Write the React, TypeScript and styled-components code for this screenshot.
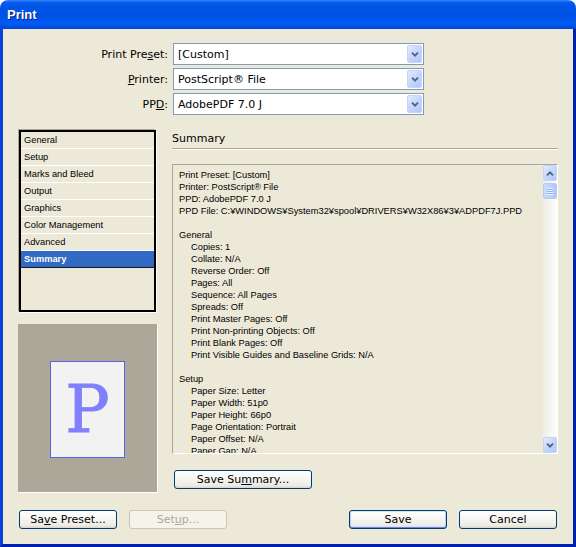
import React from "react";
import styled, { createGlobalStyle } from "styled-components";

const GlobalStyle = createGlobalStyle`
  html, body {
    margin: 0;
    padding: 0;
    background: #ffffff;
  }
  body {
    font-family: "DejaVu Sans", "Liberation Sans", sans-serif;
    font-size: 11px;
    color: #000;
  }
`;

const Window = styled.div`
  width: 576px;
  height: 547px;
  display: flex;
  flex-direction: column;
  border-radius: 8px 8px 0 0;
  overflow: hidden;
  box-sizing: border-box;
`;

const TitleBar = styled.div`
  height: 29px;
  flex: none;
  display: flex;
  align-items: center;
  padding-left: 7px;
  padding-bottom: 1px;
  box-sizing: border-box;
  background: linear-gradient(
    to bottom,
    #3a8cff 0%,
    #0a5ff0 7%,
    #0055e6 20%,
    #0052e6 55%,
    #005bf5 80%,
    #0046d5 100%
  );
  color: #fff;
  font: bold 13px "Liberation Sans", Arial, sans-serif;
  text-shadow: 1px 1px 0 #0a1c8a;
`;

const Frame = styled.div`
  flex: 1;
  display: flex;
  border-left: 3px solid #0842d8;
  border-right: 3px solid #0021b0;
  border-bottom: 3px solid #0021b0;
`;

const Body = styled.div`
  flex: 1;
  background: #ece9d8;
  padding: 14px 15px 15px 15px;
  display: flex;
  flex-direction: column;
`;

const Fields = styled.div`
  display: grid;
  grid-template-columns: 150px 251px;
  column-gap: 5px;
  row-gap: 3px;
`;

const Label = styled.label`
  text-align: right;
  align-self: center;
  white-space: nowrap;
`;

const Select = styled.div`
  height: 22px;
  box-sizing: border-box;
  border: 1px solid #7f9db9;
  background: #fff;
  display: flex;
  align-items: center;
  padding-left: 4px;
`;

const SelectValue = styled.span`
  flex: 1;
  white-space: nowrap;
`;

const XpArrowButton = styled.div<{ $w: number; $h: number }>`
  width: ${(p) => p.$w}px;
  height: ${(p) => p.$h}px;
  box-sizing: border-box;
  border: 1px solid #c3d3fd;
  border-radius: 2px;
  background: linear-gradient(135deg, #e4ecfe 0%, #c6d5fb 50%, #b2c7f6 100%);
  display: flex;
  align-items: center;
  justify-content: center;
  flex: none;
`;

const DropButton = styled(XpArrowButton)`
  margin-right: 1px;
`;

const Main = styled.div`
  margin-top: 14px;
  display: flex;
  gap: 14px;
`;

const LeftColumn = styled.div`
  width: 140px;
  display: flex;
  flex-direction: column;
`;

const PanelList = styled.ul`
  list-style: none;
  margin: 1px;
  padding: 0;
  width: 137px;
  height: 182px;
  box-sizing: border-box;
  border: 2px solid #000;
  box-shadow: -1px -1px 0 #aca899, 1px 1px 0 #fff;
  font: 9.3px "Liberation Sans", Arial, sans-serif;
`;

const PanelItem = styled.li<{ $selected?: boolean }>`
  height: 17px;
  box-sizing: border-box;
  padding-left: 3px;
  display: flex;
  align-items: center;
  border-bottom: 1px solid ${(p) => (p.$selected ? "#1a1a1a" : "#ffffff")};
  background: ${(p) => (p.$selected ? "#316ac5" : "transparent")};
  color: ${(p) => (p.$selected ? "#fff" : "#000")};
  font-weight: ${(p) => (p.$selected ? "bold" : "normal")};
`;

const Preview = styled.div`
  margin-top: 11px;
  width: 140px;
  height: 169px;
  box-sizing: border-box;
  background: #aca899;
  border-right: 1px solid #fff;
  border-bottom: 1px solid #fff;
  display: flex;
  align-items: center;
  justify-content: center;
  padding-top: 3px;
`;

const PreviewPage = styled.div`
  width: 75px;
  height: 97px;
  box-sizing: border-box;
  border: 1px solid #5f5fe8;
  background: #f2f2f2;
  display: flex;
  align-items: center;
  justify-content: center;
  color: #8080ff;
  font: 66px "DejaVu Serif", "Liberation Serif", serif;
  line-height: 1;
  -webkit-text-stroke: 0.8px #8080ff;
`;

const RightColumn = styled.div`
  flex: 1;
  display: flex;
  flex-direction: column;
`;

const SectionTitle = styled.div`
  height: 20px;
  box-sizing: border-box;
  padding: 3px 0 0 0;
  border-bottom: 1px solid #aca899;
  box-shadow: 0 1px 0 #fff;
  font-size: 11px;
`;

const SummaryBox = styled.div`
  margin-top: 15px;
  height: 290px;
  box-sizing: border-box;
  border: 1px solid #aca899;
  border-right-color: #fff;
  border-bottom-color: #fff;
  display: flex;
`;

const SummaryText = styled.div`
  flex: 1;
  overflow: hidden;
  padding: 4px 6px 0 6px;
  font: 9.3px "Liberation Sans", Arial, sans-serif;
  line-height: 12px;
  white-space: nowrap;
`;

const SummaryLine = styled.div<{ $indent?: boolean }>`
  height: 12px;
  padding-left: ${(p) => (p.$indent ? "12px" : "0")};
`;

const ScrollBar = styled.div`
  width: 14px;
  display: flex;
  flex-direction: column;
  background: linear-gradient(to right, #eeede5, #fdfdfb);
`;

const ScrollThumb = styled.div`
  margin-top: 2px;
  height: 16px;
  box-sizing: border-box;
  border: 1px solid #b6c9f7;
  border-radius: 2px;
  background: linear-gradient(to right, #cad8fb, #bcd0fa 60%, #b0c6f6);
  display: flex;
  align-items: center;
  justify-content: center;
`;

const Grip = styled.div`
  width: 6px;
  height: 7px;
  background: repeating-linear-gradient(
    to bottom,
    #eef3ff 0px,
    #eef3ff 1px,
    #8caef0 1px,
    #8caef0 2px
  );
`;

const ScrollSpacer = styled.div`
  flex: 1;
`;

const Button = styled.button<{ $default?: boolean; $width: number }>`
  width: ${(p) => p.$width}px;
  height: 19px;
  box-sizing: border-box;
  padding: 0;
  border: 1px solid ${(p) => (p.disabled ? "#c9c7ba" : "#003c74")};
  border-radius: 3px;
  background: ${(p) =>
    p.disabled
      ? "#f5f4ea"
      : "linear-gradient(to bottom, #ffffff 0%, #f6f6f2 45%, #ecebe5 85%, #d8d3c8 100%)"};
  color: ${(p) => (p.disabled ? "#aca899" : "#000")};
  font: 11px "DejaVu Sans", "Liberation Sans", sans-serif;
  box-shadow: ${(p) =>
    p.$default
      ? "inset 0 1px 0 #cee7ff, inset 0 -1px 0 #6982ee, inset 1px 0 0 #b8d0f9, inset -1px 0 0 #b8d0f9"
      : "none"};
  flex: none;
`;

const SummaryButton = styled(Button)`
  margin-top: 16px;
  margin-left: 2px;
`;

const Footer = styled.div`
  margin-top: auto;
  display: flex;
  align-items: center;
  padding: 0 1px;
`;

const ButtonGroup = styled.div`
  display: flex;
  gap: 12px;
`;

const FooterSpacer = styled.div`
  flex: 1;
`;

const Key = styled.span`
  text-decoration: underline;
  text-underline-offset: 1px;
`;

const Chevron = ({ up }: { up?: boolean }) => (
  <svg width="8" height="5" viewBox="0 0 8 5">
    <path
      d={up ? "M1 4.3 L4 1.3 L7 4.3" : "M1 0.7 L4 3.7 L7 0.7"}
      fill="none"
      stroke="#4d6185"
      strokeWidth="1.7"
    />
  </svg>
);

const panels = [
  "General",
  "Setup",
  "Marks and Bleed",
  "Output",
  "Graphics",
  "Color Management",
  "Advanced",
  "Summary",
];

const summary: { text: string; indent?: boolean }[] = [
  { text: "Print Preset: [Custom]" },
  { text: "Printer: PostScript® File" },
  { text: "PPD: AdobePDF 7.0 J" },
  { text: "PPD File: C:¥WINDOWS¥System32¥spool¥DRIVERS¥W32X86¥3¥ADPDF7J.PPD" },
  { text: "" },
  { text: "General" },
  { text: "Copies: 1", indent: true },
  { text: "Collate: N/A", indent: true },
  { text: "Reverse Order: Off", indent: true },
  { text: "Pages: All", indent: true },
  { text: "Sequence: All Pages", indent: true },
  { text: "Spreads: Off", indent: true },
  { text: "Print Master Pages: Off", indent: true },
  { text: "Print Non-printing Objects: Off", indent: true },
  { text: "Print Blank Pages: Off", indent: true },
  { text: "Print Visible Guides and Baseline Grids: N/A", indent: true },
  { text: "" },
  { text: "Setup" },
  { text: "Paper Size: Letter", indent: true },
  { text: "Paper Width: 51p0", indent: true },
  { text: "Paper Height: 66p0", indent: true },
  { text: "Page Orientation: Portrait", indent: true },
  { text: "Paper Offset: N/A", indent: true },
  { text: "Paper Gap: N/A", indent: true },
];

const SelectField = ({ value }: { value: string }) => (
  <Select>
    <SelectValue>{value}</SelectValue>
    <DropButton $w={15} $h={18}>
      <Chevron />
    </DropButton>
  </Select>
);

export default function App() {
  return (
    <>
      <GlobalStyle />
      <Window>
        <TitleBar>Print</TitleBar>
        <Frame>
          <Body>
            <Fields>
              <Label>
                Print Pre<Key>s</Key>et:
              </Label>
              <SelectField value="[Custom]" />
              <Label>
                <Key>P</Key>rinter:
              </Label>
              <SelectField value="PostScript® File" />
              <Label>
                PP<Key>D</Key>:
              </Label>
              <SelectField value="AdobePDF 7.0 J" />
            </Fields>

            <Main>
              <LeftColumn>
                <PanelList>
                  {panels.map((name) => (
                    <PanelItem key={name} $selected={name === "Summary"}>
                      {name}
                    </PanelItem>
                  ))}
                </PanelList>
                <Preview>
                  <PreviewPage>P</PreviewPage>
                </Preview>
              </LeftColumn>

              <RightColumn>
                <SectionTitle>Summary</SectionTitle>
                <SummaryBox>
                  <SummaryText>
                    {summary.map((line, i) => (
                      <SummaryLine key={i} $indent={line.indent}>
                        {line.text}
                      </SummaryLine>
                    ))}
                  </SummaryText>
                  <ScrollBar>
                    <XpArrowButton $w={14} $h={16}>
                      <Chevron up />
                    </XpArrowButton>
                    <ScrollThumb>
                      <Grip />
                    </ScrollThumb>
                    <ScrollSpacer />
                    <XpArrowButton $w={14} $h={16}>
                      <Chevron />
                    </XpArrowButton>
                  </ScrollBar>
                </SummaryBox>
                <SummaryButton $width={138}>
                  Save Su<Key>m</Key>mary...
                </SummaryButton>
              </RightColumn>
            </Main>

            <Footer>
              <ButtonGroup>
                <Button $width={98}>
                  Sa<Key>v</Key>e Preset...
                </Button>
                <Button $width={98} disabled>
                  Set<Key>u</Key>p...
                </Button>
              </ButtonGroup>
              <FooterSpacer />
              <ButtonGroup>
                <Button $width={98} $default>
                  Save
                </Button>
                <Button $width={98}>Cancel</Button>
              </ButtonGroup>
            </Footer>
          </Body>
        </Frame>
      </Window>
    </>
  );
}
